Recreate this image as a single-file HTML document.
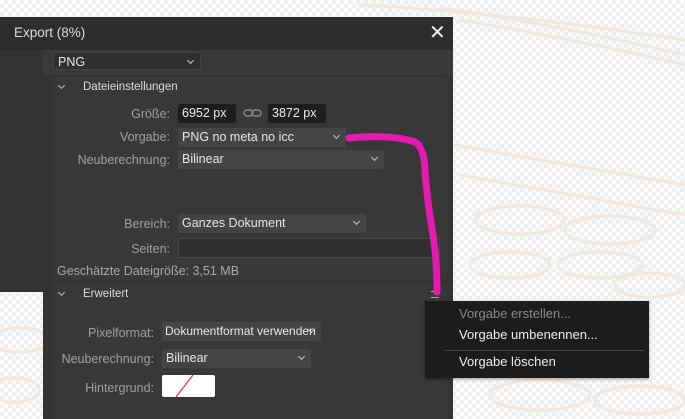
<!DOCTYPE html>
<html><head><meta charset="utf-8"><style>
*{margin:0;padding:0;box-sizing:border-box}
body{width:685px;height:419px;overflow:hidden;position:relative;font-family:"Liberation Sans",sans-serif;font-size:12px;
background-color:#fafafa;background-image:linear-gradient(45deg,#eee 25%,transparent 25%,transparent 75%,#eee 75%),linear-gradient(45deg,#eee 25%,transparent 25%,transparent 75%,#eee 75%);background-size:8px 8px;background-position:0 0,4px 4px}
.a{position:absolute}
.lbl{color:#a0a0a0;text-align:right;position:absolute;font-size:12.5px}
.dd{position:absolute;background:#444;border-radius:2px;color:#e8e8e8;padding:3px 4px;height:19px;line-height:13px;font-size:12.5px;white-space:nowrap;overflow:hidden}
.dd:after{content:"";position:absolute;right:7px;top:5px;width:4px;height:4px;border-right:1.5px solid #ccc;border-bottom:1.5px solid #ccc;transform:rotate(45deg)}
.in{position:absolute;background:#1e1e1e;color:#eee;padding:3px 4px;height:19px;line-height:13px;border-radius:2px;font-size:12.5px}
.chev{position:absolute;width:5px;height:5px;border-right:1.5px solid #bbb;border-bottom:1.5px solid #bbb;transform:rotate(45deg)}
</style></head><body>
<svg class="a" style="left:0;top:0" width="685" height="419">
<g fill="none" stroke="#f0e9e1" stroke-width="3" stroke-linecap="round">
<path d="M440 8 Q560 25 685 55"/><path d="M460 20 Q580 40 685 65"/><path d="M360 5 Q500 12 685 40"/>
<path d="M455 145 Q570 165 685 185"/><path d="M460 175 Q570 195 685 215"/>
<ellipse cx="520" cy="220" rx="45" ry="14"/><ellipse cx="610" cy="230" rx="45" ry="14"/><ellipse cx="510" cy="265" rx="40" ry="13"/><ellipse cx="600" cy="265" rx="42" ry="13"/><ellipse cx="650" cy="285" rx="35" ry="12"/>
<ellipse cx="540" cy="395" rx="50" ry="15"/><ellipse cx="640" cy="400" rx="45" ry="14"/><ellipse cx="20" cy="340" rx="30" ry="12"/><ellipse cx="15" cy="390" rx="25" ry="12"/>
</g></svg>
<div class="a" style="left:0;top:17px;width:453px;height:33px;background:#2d2d2d"></div>
<div class="a" style="left:14px;top:25px;color:#ddd;font-size:13.5px">Export (8%)</div>
<div class="a" style="left:429px;top:20px;color:#eee;font-size:20px">✕</div>
<div class="a" style="left:0;top:50px;width:453px;height:242px;background:#333"></div>
<div class="a" style="left:43px;top:292px;width:410px;height:127px;background:#333"></div>
<div class="a" style="left:43px;top:50px;width:410px;height:25px;background:#3a3a3a"></div>
<div class="dd" style="left:53px;top:52px;width:148px;height:18px;background:#2f2f2f;border:1px solid #444">PNG</div>
<div class="a" style="left:53px;top:77px;width:394px;height:203px;background:#383838"></div>
<div class="chev" style="left:59px;top:83px"></div>
<div class="a" style="left:83px;top:81px;color:#ddd;font-size:11.5px">Dateieinstellungen</div>
<div class="lbl" style="right:515px;top:107px">Größe:</div>
<div class="in" style="left:178px;top:104px;width:58px">6952 px</div>
<svg class="a" style="left:243px;top:108px" width="20" height="10"><rect x="1" y="2" width="9" height="6" rx="3" fill="none" stroke="#888" stroke-width="1.4"/><rect x="9" y="2" width="9" height="6" rx="3" fill="none" stroke="#888" stroke-width="1.4"/></svg>
<div class="in" style="left:268px;top:104px;width:58px">3872 px</div>
<div class="lbl" style="right:515px;top:130px">Vorgabe:</div>
<div class="dd" style="left:178px;top:128px;width:168px">PNG no meta no icc</div>
<div class="lbl" style="right:515px;top:153px">Neuberechnung:</div>
<div class="dd" style="left:178px;top:150px;width:206px">Bilinear</div>
<div class="lbl" style="right:515px;top:217px">Bereich:</div>
<div class="dd" style="left:178px;top:214px;width:188px">Ganzes Dokument</div>
<div class="lbl" style="right:515px;top:242px">Seiten:</div>
<div class="a" style="left:178px;top:238px;width:262px;height:20px;background:#303030;border:1px solid #474747"></div>
<div class="a" style="left:57px;top:264px;color:#a8a8a8;font-size:12.5px">Geschätzte Dateigröße: 3,51 MB</div>
<div class="a" style="left:53px;top:283px;width:394px;height:136px;background:#383838"></div>
<div class="chev" style="left:59px;top:290px"></div>
<div class="a" style="left:83px;top:288px;color:#ddd;font-size:11.5px">Erweitert</div>
<div class="a" style="left:431px;top:291px;width:8px;height:7px;border-top:1.5px solid #aaa;border-bottom:1.5px solid #aaa"></div>
<div class="lbl" style="right:531px;top:326px">Pixelformat:</div>
<div class="dd" style="left:162px;top:322px;width:159px;font-size:12px;padding-left:3px">Dokumentformat verwenden</div>
<div class="lbl" style="right:531px;top:352px">Neuberechnung:</div>
<div class="dd" style="left:162px;top:349px;width:149px">Bilinear</div>
<div class="lbl" style="right:531px;top:381px">Hintergrund:</div>
<div class="a" style="left:162px;top:375px;width:53px;height:22px;background:#fff;border-radius:2px;overflow:hidden"><svg width="53" height="22"><line x1="14" y1="22" x2="31" y2="0" stroke="#e33" stroke-width="1.2"/></svg></div>
<div class="a" style="left:425px;top:301px;width:224px;height:77px;background:#1c1c1c;box-shadow:0 1px 3px rgba(0,0,0,.4)"></div>
<div class="a" style="left:459px;top:306px;color:#8a8a8a;font-size:13px">Vorgabe erstellen...</div>
<div class="a" style="left:459px;top:327px;color:#eee;font-size:13px">Vorgabe umbenennen...</div>
<div class="a" style="left:445px;top:350px;width:199px;height:1px;background:#444"></div>
<div class="a" style="left:459px;top:354px;color:#eee;font-size:13px">Vorgabe löschen</div>
<svg class="a" style="left:0;top:0" width="685" height="419"><path d="M349 138 Q390 134 415 142 Q424 147 425 170 Q427 200 433 235 Q437 260 437 292" fill="none" stroke="#e41bb0" stroke-width="7" stroke-linecap="round"/></svg>
</body></html>
